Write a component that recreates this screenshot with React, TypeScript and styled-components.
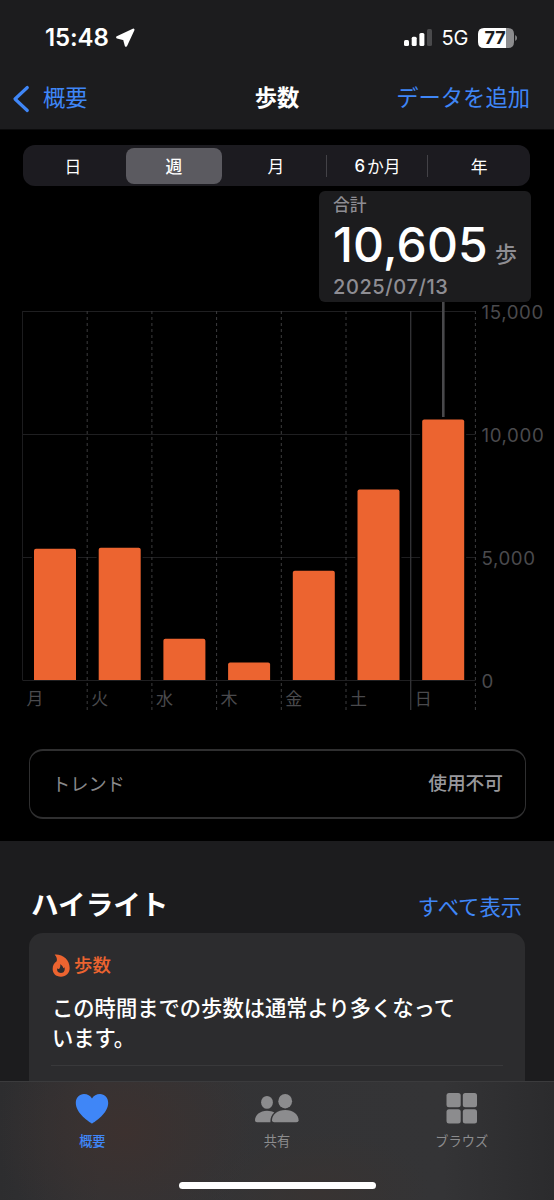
import React from "react";
import styled, { createGlobalStyle } from "styled-components";

const Global = createGlobalStyle`
  * { box-sizing: border-box; }
  body { margin: 0; background: #000; font-family: Inter, "Noto Sans CJK JP", sans-serif; color: #fff; -webkit-font-smoothing: antialiased; }
`;

const BLUE = "#3f86f7";
const ORANGE = "#ec6430";
const FONT = 'Inter, "Noto Sans CJK JP", sans-serif';

const Screen = styled.div`
  position: relative; width: 554px; height: 1200px; overflow: hidden;
  display: flex; flex-direction: column; background: #000; line-height: 1; white-space: nowrap;
`;
const Header = styled.header`
  height: 130px; flex: none; background: #1c1c1e; border-bottom: 1px solid #0b0b0c;
`;
const StatusBar = styled.div`
  height: 74px; padding: 1px 37px 0 45px; display: flex; align-items: center; justify-content: space-between;
`;
const Cluster = styled.div<{ $gap: number }>`
  display: flex; align-items: center; gap: ${(p) => p.$gap}px;
`;
const Clock = styled.span`font-size: 24px; font-weight: 600; letter-spacing: -0.1px;`;
const Network = styled.span`font-size: 20px; font-weight: 400;`;
const NavBar = styled.nav`
  height: 49px; padding: 0 12px; display: grid; grid-template-columns: 1fr auto 1fr; align-items: center;
`;
const NavLink = styled.a<{ $end?: boolean }>`
  display: flex; align-items: center; gap: 13px; color: ${BLUE}; font-size: 22.3px;
  justify-content: ${(p) => (p.$end ? "flex-end" : "flex-start")};
  padding-right: ${(p) => (p.$end ? 12 : 0)}px;
`;
const NavTitle = styled.h1`margin: 0; font-size: 22.3px; font-weight: 700;`;

const Segments = styled.div`
  margin: 15px 24px 0 23px; height: 41px; flex: none; padding: 2.5px 3px; border-radius: 12px; background: #1c1b20;
  display: grid; grid-template-columns: 94px 96px repeat(3, 1fr); column-gap: 6px;
`;
const Segment = styled.button<{ $on?: boolean; $divider?: boolean }>`
  border: 0; padding: 0; color: #fff; font: ${(p) => (p.$on ? 500 : 400)} 16.8px ${FONT}; border-radius: 8px;
  background: ${(p) => (p.$on ? "#5b5a60" : "transparent")};
  display: flex; align-items: center; justify-content: center; position: relative;
  &::after {
    content: ""; display: ${(p) => (p.$divider ? "block" : "none")};
    position: absolute; right: -3px; top: 7px; width: 1px; height: 22px; background: #434247;
  }
`;
const Digit = styled.span`margin-right: 2px; font-weight: 500;`;
const ChartArea = styled.section`height: 563px; flex: none; position: relative;`;
const Chart = styled.svg`display: block;`;
const Tooltip = styled.div`
  position: absolute; left: 319px; top: 5px; width: 212px; height: 111px; border-radius: 6px;
  background: #1c1c1e; padding: 5px 14px; color: #8e8d93; display: flex; flex-direction: column;
`;
const TipLabel = styled.span`font-size: 16.8px; line-height: 19px; font-weight: 500;`;
const TipValue = styled.div`
  display: flex; align-items: baseline; gap: 7px; height: 61px; flex: none;
  font-size: 22px; line-height: 60px; font-weight: 500;
  strong { color: #fff; font-size: 48px; font-weight: 500; letter-spacing: 0.2px; }
`;
const TipDate = styled.span`font-size: 20px; line-height: 22px; font-weight: 500; letter-spacing: 0.6px;`;
const Trend = styled.div`
  margin: 0 28px 0 29px; height: 70px; flex: none; border: solid #2f2f30; border-width: 2px 1px; border-radius: 14px;
  padding: 1px 22px 0; display: flex; align-items: center; justify-content: space-between; color: #88888a; font-size: 18.2px;
  b { font-weight: 500; font-size: 18.7px; color: #98989c; }
`;
const Highlights = styled.section`margin-top: 22px; flex: 1; background: #1c1c1e; padding: 0 29px;`;
const SectionHead = styled.div`
  height: 92px; padding: 38px 3px 0 2px; display: flex; align-items: center; justify-content: space-between;
`;
const SectionTitle = styled.h2`margin: 0; font-size: 27.6px; font-weight: 700;`;
const ShowAll = styled.a`font-size: 21.3px; color: ${BLUE}; padding-top: 4px;`;
const Card = styled.article`height: 280px; border-radius: 14px; background: #2c2c2e; padding: 19px 22px;`;
const CardLabel = styled.div`
  height: 26px; display: flex; align-items: center; gap: 4px; color: ${ORANGE};
  font-size: 18.4px; font-weight: 500; padding: 1px 0 0 1px;
`;
const CardText = styled.p`
  margin: 15px 0 0; padding: 0 0 12px 1px; border-bottom: 1px solid #39393b;
  font-size: 21.3px; line-height: 30px; font-weight: 500;
`;
const TabBar = styled.footer`
  position: absolute; left: 0; right: 0; bottom: 0; height: 119px; border-top: 1px solid #3b3b3d;
  background: radial-gradient(ellipse 130px 110px at 125px 50px, #3c312f, #3c312f00),
    radial-gradient(ellipse 110px 60px at 320px 110px, #383332, #38333200),
    linear-gradient(90deg, #2d2d2f, #333335 18%, #343436 80%, #2b2b2d);
  display: grid; grid-template-columns: repeat(3, 184.7px); align-items: start;
`;
const Tab = styled.a<{ $on?: boolean }>`
  padding-top: 10px; display: flex; flex-direction: column; align-items: center; gap: 10px;
  font-size: 13.2px; font-weight: ${(p) => (p.$on ? 500 : 400)}; color: ${(p) => (p.$on ? BLUE : "#8c8c8e")};
`;
const HomeIndicator = styled.div`
  position: absolute; left: 179px; bottom: 11px; width: 197px; height: 7px; border-radius: 4px; background: #fff;
`;

const days = [
  { name: "月", top: 548.7 }, { name: "火", top: 547.8 }, { name: "水", top: 638.8 }, { name: "木", top: 662.5 },
  { name: "金", top: 570.7 }, { name: "土", top: 489.6 }, { name: "日", top: 419.5 },
];
const STEP = 64.7;
const LEFT = 22.5;
const levels = [
  { label: "15,000", y: 311.5 }, { label: "10,000", y: 434.5 }, { label: "5,000", y: 557.5 }, { label: "0", y: 680.5 },
];

function StepsChart() {
  return (
    <Chart width="554" height="563" viewBox="0 186 554 563" fontFamily={FONT}>
      {levels.map((l) => (
        <g key={l.label}>
          <line x1={LEFT} x2="475.5" y1={l.y} y2={l.y} stroke="#1f1f21" />
          <text x="481.5" y={l.y + 7} fontSize="18.7" letterSpacing="0.6" fill="#4a4a4d">{l.label}</text>
        </g>
      ))}
      <line x1={LEFT} x2={LEFT} y1="311" y2="680" stroke="#1c1c1e" />
      {days.map((d, i) => {
        const x = LEFT + STEP * i;
        const solid = i === 5;
        return (
          <g key={d.name}>
            <line x1={x + STEP} x2={x + STEP} y1="311" y2="710" stroke={solid ? "#343437" : "#3c3c3e"}
              strokeWidth={solid ? 1.3 : 1} strokeDasharray={solid ? undefined : "3 3"} />
            <rect x={x + 9.4} y={d.top} width="46" height={680 - d.top} fill="#000" />
            <path d={`M${x + 11.5} 680V${d.top + 2}q0-2 2-2h38q2 0 2 2V680z`} fill={ORANGE} />
            <text x={x + 4} y="705" fontSize="17" fill="#4a4a4d">{d.name}</text>
          </g>
        );
      })}
      <line x1="443.3" x2="443.3" y1="300" y2="417" stroke="#48484b" strokeWidth="2.6" />
    </Chart>
  );
}

export default function App() {
  return (
    <Screen>
      <Global />
      <Header>
        <StatusBar>
          <Cluster $gap={6}>
            <Clock>15:48</Clock>
            <svg width="21" height="20" viewBox="0 0 21 20"><path d="M18.300 1.800 11 17.600 9.200 11.200 2.300 9.400z" fill="#fff" stroke="#fff" strokeWidth="2.4" strokeLinejoin="round" /></svg>
          </Cluster>
          <Cluster $gap={9.5}>
            <svg width="28" height="19" viewBox="0 0 28 19" fill="#fff">
              <rect x="0" y="12" width="5" height="6" rx="1.5" /><rect x="7.7" y="8.8" width="5" height="9.2" rx="1.5" />
              <rect x="15.4" y="5" width="5" height="13" rx="1.5" /><rect x="23" y="1" width="5" height="17" rx="1.5" fill="#4a4a4c" />
            </svg>
            <Network>5G</Network>
            <svg width="39" height="20" viewBox="0 0 39 20">
              <path d="M28 0h2q6 0 6 6v8q0 6-6 6h-2z" fill="#8c8c8e" /><path d="M28 0H6Q0 0 0 6v8q0 6 6 6h22z" fill="#fff" />
              <path d="M37.200 7q1.800 1 1.800 3t-1.800 3z" fill="#8c8c8e" />
              <text x="17.2" y="16.3" fontSize="18" fontWeight="700" textAnchor="middle" fill="#1c1c1e" fontFamily={FONT}>77</text>
            </svg>
          </Cluster>
        </StatusBar>
        <NavBar>
          <NavLink>
            <svg width="18" height="28" viewBox="0 0 18 28"><path d="M15.300 2.500 3 14l12.300 11.500" fill="none" stroke={BLUE} strokeWidth="3.2" strokeLinecap="round" strokeLinejoin="round" /></svg>
            概要
          </NavLink>
          <NavTitle>歩数</NavTitle>
          <NavLink $end>データを追加</NavLink>
        </NavBar>
      </Header>
      <Segments>
        <Segment>日</Segment>
        <Segment $on>週</Segment>
        <Segment $divider>月</Segment>
        <Segment $divider><Digit>6</Digit>か月</Segment>
        <Segment>年</Segment>
      </Segments>
      <ChartArea>
        <StepsChart />
        <Tooltip>
          <TipLabel>合計</TipLabel>
          <TipValue><strong>10,605</strong>歩</TipValue>
          <TipDate>2025/07/13</TipDate>
        </Tooltip>
      </ChartArea>
      <Trend><span>トレンド</span><b>使用不可</b></Trend>
      <Highlights>
        <SectionHead><SectionTitle>ハイライト</SectionTitle><ShowAll>すべて表示</ShowAll></SectionHead>
        <Card>
          <CardLabel>
            <svg width="18" height="23" viewBox="0 0 54 69"><path fillRule="evenodd" d="M8 2C32 0 53 18 53 42 53 58 42 68 27 68 11 68 2 58 2 45 2 35 6 27 14 22 16 16 14 8 8 2ZM24 31C30 34 33 38 34 43 36 42 37 41 37 39 40 46 38 57 27 57 17 57 14 50 16 43 18 45 20 45 22 44 25 40 26 36 24 31Z" fill={ORANGE} /></svg>
            歩数
          </CardLabel>
          <CardText>この時間までの歩数は通常より多くなって<br />います。</CardText>
        </Card>
      </Highlights>
      <TabBar>
        <Tab $on>
          <svg width="34" height="33" viewBox="0 0 34 33"><path d="M17 31.500C14 30 .8 21 .8 11 .8 5.500 4.500 2 9 2c3.500 0 6.300 1.700 8 4.500C18.700 3.700 21.500 2 25 2c4.500 0 8.200 3.500 8.200 9C33.200 21 20 30 17 31.500z" fill={BLUE} /></svg>
          概要
        </Tab>
        <Tab>
          <svg width="46" height="33" viewBox="0 0 46 33" fill="#8c8c8e">
            <ellipse cx="13" cy="10.400" rx="5.900" ry="6.400" /><path d="M1 28.500C1 23 6 18.700 13 18.700c3 0 5.500.7 7.300 1.900-2.600 2.100-4 5-3.900 9.700H3Q1 30.300 1 28.500z" />
            <ellipse cx="31.200" cy="9.200" rx="6.900" ry="7.300" /><path d="M18 28.200c0-5.500 5.500-10.200 13.300-10.200s13.300 4.700 13.300 10.200q0 2.100-2.200 2.100H20.200q-2.200 0-2.200-2.100z" />
          </svg>
          共有
        </Tab>
        <Tab>
          <svg width="32" height="33" viewBox="0 0 32 33" fill="#8c8c8e">
            <rect x="0.5" y="1" width="14.200" height="14.200" rx="2.500" /><rect x="16.800" y="1" width="14.200" height="14.200" rx="2.500" />
            <rect x="0.5" y="17.300" width="14.200" height="14.200" rx="2.500" /><rect x="16.800" y="17.300" width="14.200" height="14.200" rx="2.500" />
          </svg>
          ブラウズ
        </Tab>
        <HomeIndicator />
      </TabBar>
    </Screen>
  );
}
